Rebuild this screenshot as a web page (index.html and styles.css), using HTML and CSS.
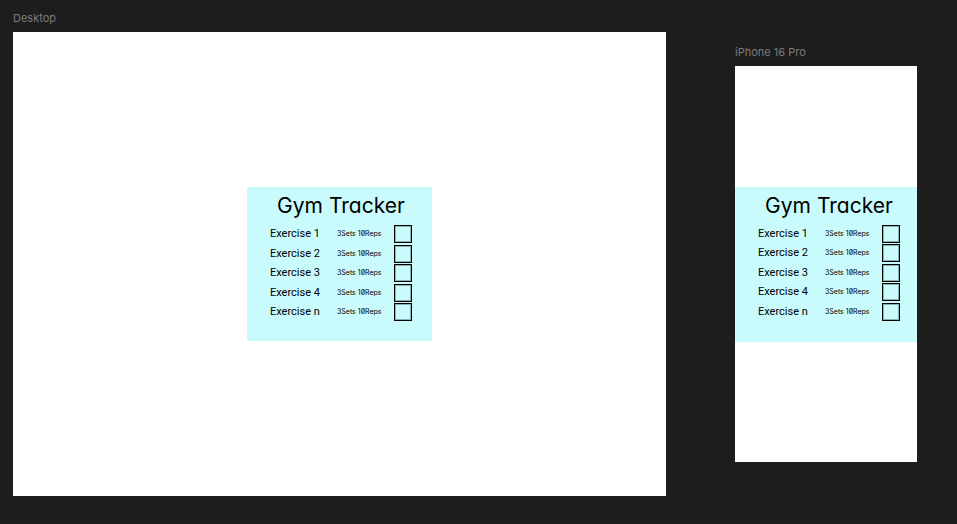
FILE: index.html
```html
<!DOCTYPE html>
<html lang="en">
<head>
<meta charset="utf-8">
<meta name="viewport" content="width=device-width, initial-scale=1">
<title>Gym Tracker</title>
<link rel="stylesheet" href="styles.css">
</head>
<body>
<main class="canvas">
  <section class="artboard">
    <h2 class="artboard-name">Desktop</h2>
    <div class="frame frame-desktop">
      <article class="card">
        <h1 class="title">Gym Tracker</h1>
        <ul class="exercises">
          <li class="exercise"><label class="name" for="d1">Exercise 1</label><span class="reps">3Sets 10Reps</span><input class="check" type="checkbox" id="d1"></li>
          <li class="exercise"><label class="name" for="d2">Exercise 2</label><span class="reps">3Sets 10Reps</span><input class="check" type="checkbox" id="d2"></li>
          <li class="exercise"><label class="name" for="d3">Exercise 3</label><span class="reps">3Sets 10Reps</span><input class="check" type="checkbox" id="d3"></li>
          <li class="exercise"><label class="name" for="d4">Exercise 4</label><span class="reps">3Sets 10Reps</span><input class="check" type="checkbox" id="d4"></li>
          <li class="exercise"><label class="name" for="d5">Exercise n</label><span class="reps">3Sets 10Reps</span><input class="check" type="checkbox" id="d5"></li>
        </ul>
      </article>
    </div>
  </section>
  <section class="artboard">
    <h2 class="artboard-name">iPhone 16 Pro</h2>
    <div class="frame frame-phone">
      <article class="card">
        <h1 class="title">Gym Tracker</h1>
        <ul class="exercises">
          <li class="exercise"><label class="name" for="p1">Exercise 1</label><span class="reps">3Sets 10Reps</span><input class="check" type="checkbox" id="p1"></li>
          <li class="exercise"><label class="name" for="p2">Exercise 2</label><span class="reps">3Sets 10Reps</span><input class="check" type="checkbox" id="p2"></li>
          <li class="exercise"><label class="name" for="p3">Exercise 3</label><span class="reps">3Sets 10Reps</span><input class="check" type="checkbox" id="p3"></li>
          <li class="exercise"><label class="name" for="p4">Exercise 4</label><span class="reps">3Sets 10Reps</span><input class="check" type="checkbox" id="p4"></li>
          <li class="exercise"><label class="name" for="p5">Exercise n</label><span class="reps">3Sets 10Reps</span><input class="check" type="checkbox" id="p5"></li>
        </ul>
      </article>
    </div>
  </section>
</main>
</body>
</html>
```
FILE: styles.css
```css
* {
  box-sizing: border-box;
}

body {
  margin: 0;
  background: #1d1d1d;
  color: #000;
  font-family: Inter, "Liberation Sans", sans-serif;
}

.canvas {
  display: grid;
  grid-template-columns: 653fr 182fr;
  column-gap: 69px;
  align-items: center;
  padding: 8px 40px 24px 13px;
}

.artboard-name {
  margin: 0;
  height: 24px;
  color: #7c7c7c;
  font-size: 11px;
  font-weight: 400;
  line-height: 20px;
}

.frame {
  display: flex;
  flex-direction: column;
  justify-content: center;
  background: #fff;
}

.frame-desktop {
  aspect-ratio: 653 / 464;
  align-items: center;
}

.frame-phone {
  aspect-ratio: 182 / 396;
}

.card {
  padding: 4px 20px 20px 23px;
  background: #c9fbfc;
}

.frame-desktop .card {
  width: 185px;
}

.frame-phone .card {
  padding-right: 17px;
  padding-bottom: 21px;
}

.title {
  margin: 0;
  font-size: 21px;
  font-weight: 400;
  font-feature-settings: "cv11";
  line-height: 30px;
  padding-bottom: 4px;
  text-align: center;
}

.exercises {
  display: flex;
  flex-direction: column;
  justify-content: space-between;
  height: 96px;
  margin: 0;
  padding: 0;
  list-style: none;
}

.exercise {
  display: grid;
  grid-template-columns: 67px 1fr 18px;
  align-items: center;
  height: 18px;
}

.name {
  font-family: Roboto, sans-serif;
  font-size: 11px;
  line-height: 18px;
}

.reps {
  font-size: 7px;
  font-weight: 400;
  font-feature-settings: "zero";
  line-height: 18px;
  white-space: nowrap;
}

.check {
  appearance: none;
  width: 18px;
  height: 18px;
  margin: 0;
  border: 1px solid #000;
  background: transparent;
  box-shadow: inset 0 0 0 1px rgba(0, 0, 0, 0.3);
}

.check:checked {
  background: #000;
}
```
